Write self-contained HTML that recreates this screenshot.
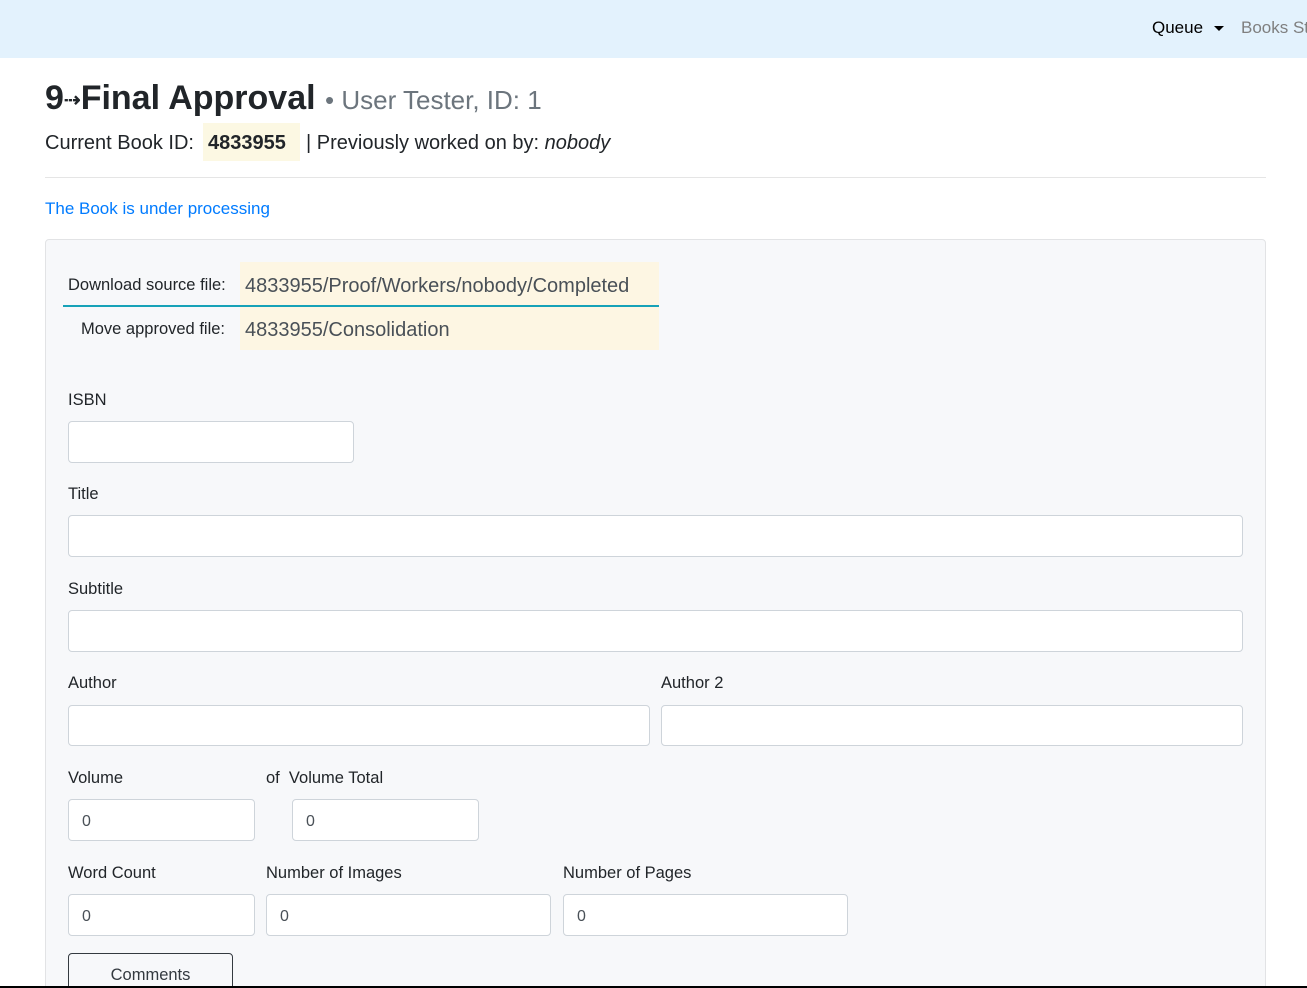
<!DOCTYPE html>
<html><head><style>
*{box-sizing:border-box;margin:0;padding:0}
html,body{width:1307px;height:988px;overflow:hidden}
body{background:#fff;font-family:"Liberation Sans",sans-serif;color:#212529;position:relative}
.a{position:absolute;white-space:nowrap}
.nav{position:absolute;left:0;top:0;width:1307px;height:58px;background:#e3f2fd}
.inp{position:absolute;background:#fff;border:1px solid #ced4da;border-radius:4px;height:42px;font-size:16px;color:#495057;padding:13px 13px}
.lbl{position:absolute;font-size:16.5px;color:#212529;white-space:nowrap}
</style></head><body>
<div class="nav"></div>
<div class="a" style="left:1152px;top:18px;font-size:17px;color:#000">Queue <span style="display:inline-block;width:0;height:0;border-left:5px solid transparent;border-right:5px solid transparent;border-top:5px solid #000;vertical-align:middle;margin-left:6px"></span></div>
<div class="a" style="left:1241px;top:18px;font-size:17px;color:#7f7f7f">Books St</div>

<div class="a" style="left:45px;top:79px;font-size:34px;font-weight:bold;color:#212529">9<span style="font-size:20px;vertical-align:middle">⇢</span>Final Approval <span style="font-size:26px;font-weight:normal;color:#6c757d">• User Tester, ID: 1</span></div>
<div class="a" style="left:45px;top:132px;font-size:20px;color:#212529">Current Book ID:</div>
<div class="a" style="left:203px;top:123px;width:97px;height:38px;background:#fcf8e3"></div>
<div class="a" style="left:208px;top:132px;font-size:20px;font-weight:bold">4833955</div>
<div class="a" style="left:306px;top:132px;font-size:20px">| Previously worked on by: <i>nobody</i></div>
<div class="a" style="left:45px;top:177px;width:1221px;height:1px;background:#e5e5e5"></div>
<div class="a" style="left:45px;top:199px;font-size:17px;color:#007bff">The Book is under processing</div>

<div class="a" style="left:45px;top:239px;width:1221px;height:760px;background:#f7f8fa;border:1px solid #e2e3e5;border-radius:4px"></div>
<div class="a" style="left:240px;top:262px;width:419px;height:88px;background:#fdf6e3"></div>
<div class="a" style="left:63px;top:305px;width:596px;height:2px;background:#17a2b8"></div>
<div class="a" style="left:68px;top:276px;font-size:16.5px">Download source file:</div>
<div class="a" style="left:245px;top:275px;font-size:20px;color:#495057">4833955/Proof/Workers/nobody/Completed</div>
<div class="a" style="left:81px;top:320px;font-size:16.5px">Move approved file:</div>
<div class="a" style="left:245px;top:319px;font-size:20px;color:#495057">4833955/Consolidation</div>

<div class="lbl" style="left:68px;top:391px">ISBN</div>
<div class="inp" style="left:68px;top:421px;width:286px"></div>
<div class="lbl" style="left:68px;top:485px">Title</div>
<div class="inp" style="left:68px;top:515px;width:1175px"></div>
<div class="lbl" style="left:68px;top:580px">Subtitle</div>
<div class="inp" style="left:68px;top:610px;width:1175px"></div>
<div class="lbl" style="left:68px;top:674px">Author</div>
<div class="lbl" style="left:661px;top:674px">Author 2</div>
<div class="inp" style="left:68px;top:705px;width:582px;height:41px"></div>
<div class="inp" style="left:661px;top:705px;width:582px;height:41px"></div>
<div class="lbl" style="left:68px;top:769px">Volume</div>
<div class="lbl" style="left:266px;top:769px">of&nbsp; Volume Total</div>
<div class="inp" style="left:68px;top:799px;width:187px">0</div>
<div class="inp" style="left:292px;top:799px;width:187px">0</div>
<div class="lbl" style="left:68px;top:864px">Word Count</div>
<div class="lbl" style="left:266px;top:864px">Number of Images</div>
<div class="lbl" style="left:563px;top:864px">Number of Pages</div>
<div class="inp" style="left:68px;top:894px;width:187px">0</div>
<div class="inp" style="left:266px;top:894px;width:285px">0</div>
<div class="inp" style="left:563px;top:894px;width:285px">0</div>
<div class="a" style="left:68px;top:953px;width:165px;height:50px;border:1px solid #343a40;border-radius:4px;font-size:16.5px;text-align:center;padding-top:12px;color:#343a40">Comments</div>
<div class="a" style="left:0;top:986px;width:1307px;height:2px;background:#000"></div>
</body></html>
